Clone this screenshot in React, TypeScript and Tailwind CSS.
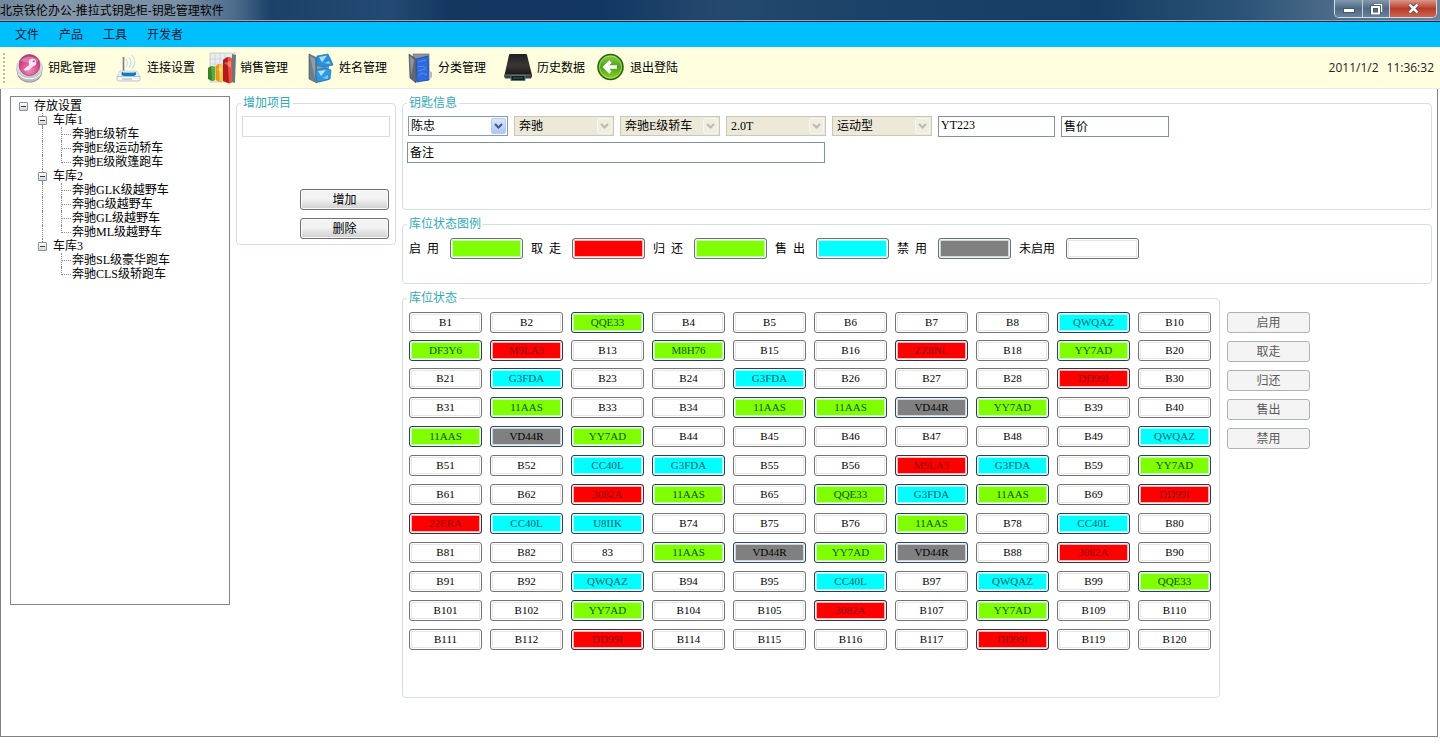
import React from "react";

const SONG = "font-['Liberation_Serif','Noto_Sans_CJK_SC',serif]";
const YAHEI = "font-['Open_Sans','Noto_Sans_CJK_SC',sans-serif]";

type Tone = "white" | "green" | "red" | "cyan" | "gray";

const toneClass: Record<Tone, string> = {
  white:
    "bg-white border-[#747474] text-black shadow-[inset_0_0_0_1px_#ffffff,inset_0_0_0_2px_#e6e6e6]",
  green:
    "bg-[#7fff00] border-[#1f4a3c] text-[#14522c] shadow-[inset_0_0_0_1px_#f2fff0,inset_0_0_0_2px_#c9ecc0]",
  red: "bg-[#ff0000] border-[#3f2c40] text-[#8f0a0a] shadow-[inset_0_0_0_1px_#ffeceb,inset_0_0_0_2px_#f3b6b4]",
  cyan: "bg-[#00ffff] border-[#17466a] text-[#14606c] shadow-[inset_0_0_0_1px_#effdff,inset_0_0_0_2px_#b4ecf2]",
  gray: "bg-[#808080] border-[#2a4a66] text-black shadow-[inset_0_0_0_1px_#eef4fa,inset_0_0_0_2px_#cfd4d8]",
};

const codeTone: Record<string, Tone> = {
  QQE33: "green",
  DF3Y6: "green",
  M8H76: "green",
  YY7AD: "green",
  "11AAS": "green",
  QWQAZ: "cyan",
  G3FDA: "cyan",
  CC40L: "cyan",
  U8IIK: "cyan",
  M9LA3: "red",
  ZZ8NL: "red",
  DD99I: "red",
  "3082A": "red",
  "22ERA": "red",
  VD44R: "gray",
};

const upperRows = [
  "B1 B2 QQE33 B4 B5 B6 B7 B8 QWQAZ B10",
  "DF3Y6 M9LA3 B13 M8H76 B15 B16 ZZ8NL B18 YY7AD B20",
  "B21 G3FDA B23 B24 G3FDA B26 B27 B28 DD99I B30",
];
const lowerRows = [
  "B31 11AAS B33 B34 11AAS 11AAS VD44R YY7AD B39 B40",
  "11AAS VD44R YY7AD B44 B45 B46 B47 B48 B49 QWQAZ",
  "B51 B52 CC40L G3FDA B55 B56 M9LA3 G3FDA B59 YY7AD",
  "B61 B62 3082A 11AAS B65 QQE33 G3FDA 11AAS B69 DD99I",
  "22ERA CC40L U8IIK B74 B75 B76 11AAS B78 CC40L B80",
  "B81 B82 83 11AAS VD44R YY7AD VD44R B88 3082A B90",
  "B91 B92 QWQAZ B94 B95 CC40L B97 QWQAZ B99 QQE33",
  "B101 B102 YY7AD B104 B105 3082A B107 YY7AD B109 B110",
  "B111 B112 DD99I B114 B115 B116 B117 DD99I B119 B120",
];

function Slot({ code }: { code: string }) {
  return (
    <button
      type="button"
      className={`h-[21px] rounded-[3px] border text-center text-[11px] leading-[19px] ${toneClass[codeTone[code] ?? "white"]}`}
    >
      {code}
    </button>
  );
}

function Group({
  title,
  className = "",
  children,
}: {
  title: string;
  className?: string;
  children: React.ReactNode;
}) {
  return (
    <fieldset className={`min-w-0 rounded-[4px] border border-[#d5dfe2] px-1 ${className}`}>
      <legend className="h-[14px] px-[2px] text-[12px] leading-[14px] text-[#2fa9b8]">{title}</legend>
      {children}
    </fieldset>
  );
}

function Combo({ label, value, disabled = false }: { label: string; value: string; disabled?: boolean }) {
  return (
    <div className="relative h-[20px] w-[100px]">
      <select
        aria-label={label}
        disabled={disabled}
        className={`block h-[20px] w-full appearance-none border pr-5 text-[12px] leading-[18px] text-black opacity-100 ${
          disabled ? "border-[#c9c7ba] bg-[#ece9d8] pl-1" : "border-[#7f9db9] bg-white pl-[2px]"
        }`}
      >
        <option>{value}</option>
      </select>
      <span
        className={`pointer-events-none absolute top-[2px] right-[2px] bottom-[2px] flex w-[15px] items-center justify-center rounded-[2px] border ${
          disabled
            ? "border-[#f7f6f0] bg-[#efece0] text-[#bdbbb0]"
            : "border-[#b4caf6] bg-linear-to-b from-[#dbe6fd] to-[#adc6f5] text-[#3f5a86]"
        }`}
      >
        <svg width="9" height="6" viewBox="0 0 9 6" fill="none" stroke="currentColor" strokeWidth="2">
          <path d="M1 1l3.500 3.500L8 1" />
        </svg>
      </span>
    </div>
  );
}

function KeyIcon() {
  return (
    <svg width="30" height="32" viewBox="0 0 30 32">
      <defs>
        <linearGradient id="kr" x1="0" y1="0" x2="0" y2="1">
          <stop offset="0" stopColor="#fff" />
          <stop offset="1" stopColor="#b9b9bd" />
        </linearGradient>
        <radialGradient id="kp" cx=".5" cy=".75" r=".8">
          <stop offset="0" stopColor="#f08ab8" />
          <stop offset=".6" stopColor="#d5448a" />
          <stop offset="1" stopColor="#b02a6c" />
        </radialGradient>
      </defs>
      <ellipse cx="14.500" cy="20" rx="12.500" ry="10.500" fill="#8f8f94" />
      <circle cx="14.500" cy="16.500" r="13" fill="url(#kr)" stroke="#b9b9be" strokeWidth=".7" />
      <path d="M3.500 22a12.500 9 0 0 0 22 0" stroke="#fff" fill="none" />
      <circle cx="14.500" cy="13" r="10.500" fill="url(#kp)" stroke="#99456f" strokeWidth=".7" />
      <path d="M5.500 9a10 8 0 0 1 18 0c-6 2-12 2-18 0z" fill="#fff" opacity=".3" />
      <circle cx="17.500" cy="10.500" r="3.800" fill="#ffe6f2" />
      <path d="M15.500 12l-7 5.500 2 1.500 1.500-1 1 .8 5-4.300z" fill="#ffe6f2" />
      <circle cx="18.800" cy="9.300" r="1.100" fill="#d5448a" />
    </svg>
  );
}

function RouterIcon() {
  return (
    <svg width="30" height="32" viewBox="0 0 30 32">
      <path d="M9.500 5v17" stroke="#777c82" strokeWidth="1.600" />
      <g fill="none" stroke="#c2e0f0" strokeWidth="1.200">
        <path d="M12 7q3 4 0 8" />
        <path d="M15 5q4 5.500 0 11" />
        <path d="M18 3q5.500 7 0 14" />
      </g>
      <path d="M6 19h17l3 6H3z" fill="#e9eef3" stroke="#c4ccd4" strokeWidth=".7" />
      <path d="M8 20h13.500q2 3.500-2 4h-9.500q-4-.5-2-4z" fill="#1b79b8" />
      <path d="M9 20.500h11.500" stroke="#7cd0ef" />
      <path d="M3 24.500h23v3q0 1.500-2 1.500H5q-2 0-2-1.500z" fill="#f3f6f9" stroke="#aab5c0" strokeWidth=".8" />
      <path d="M8 27h10" stroke="#9fb2c4" />
    </svg>
  );
}

function SalesIcon() {
  return (
    <svg width="30" height="34" viewBox="0 0 30 34">
      <path d="M3 2h25l-1 29H3z" fill="#e9edf0" stroke="#bcc3c8" strokeWidth=".8" />
      <path d="M3 8h24M3 13h24M3 18h24M8 2v20M13 2v20M18 2v20" stroke="#c5cbd0" strokeWidth=".7" />
      <path d="M25 3l4 1-1 28-3-1z" fill="#70757a" />
      <path d="M1 17l3-2 4 1v13l-3 1-4-2z" fill="#348427" />
      <path d="M4 15l4 1v13l-3 1z" fill="#59ab42" />
      <path d="M8.500 15l3-2 4 1v16l-3 1-4-2z" fill="#e19a12" />
      <path d="M12 13.500l3.500 1v15l-3 1z" fill="#f7cd4d" />
      <path d="M16 9l4-3 5 1v24l-3 1.500-6-2.500z" fill="#b71818" />
      <path d="M20.500 6l4.500 1v24l-3 1.500z" fill="#e95146" />
      <path d="M9 18l6-1v4z" fill="#fff" opacity=".3" />
      <path d="M17 12l7-2v7z" fill="#fff" opacity=".3" />
    </svg>
  );
}

function NamesIcon() {
  return (
    <svg width="30" height="34" viewBox="0 0 30 34">
      <path d="M3 3l8 4v25l-8-4z" fill="#6f7d88" stroke="#4c5965" strokeWidth=".7" />
      <path d="M11 7l12-1v23l-12 3z" fill="#8c9ba6" />
      <path d="M4 5l5 3v20z" fill="#a7b3bc" opacity=".6" />
      <path d="M11 5l11-2 2 4 3 7-9 2-8-2z" fill="#2692dd" stroke="#1870b3" strokeWidth=".7" />
      <path d="M13 6l8-1.500-5 7z" fill="#a7dcf8" />
      <path d="M18 12l5-2 1 3z" fill="#8ccff5" />
      <path d="M10 19l9-2 6 2-1 9-12 3-2-4z" fill="#2c9ae4" stroke="#1870b3" strokeWidth=".7" />
      <path d="M12 20l8-1-5 6z" fill="#b1e0f9" />
      <path d="M16 27l6-3v4z" fill="#7cc4f0" />
    </svg>
  );
}

function FolderIcon() {
  return (
    <svg width="30" height="34" viewBox="0 0 30 34">
      <path d="M8 3h16v26l-13 1z" fill="#8b93a1" stroke="#666e7a" strokeWidth=".7" />
      <path d="M11 8l12-3 1 24-12 2z" fill="#2f6ae0" stroke="#1946a4" strokeWidth=".7" />
      <path d="M13 11l8-2M13 16l5-1 3 2M13 20l8-2M13 25l4-3 5 2" stroke="#5d90ee" strokeWidth=".9" fill="none" />
      <path d="M24 20l3 1v5l-3 3z" fill="#b5bac2" />
      <path d="M4 3l7 5v24l-6-5z" fill="#626975" stroke="#474d58" strokeWidth=".7" />
      <path d="M5 5l4 4-3 16z" fill="#a2a9b4" opacity=".7" />
    </svg>
  );
}

function DriveIcon() {
  return (
    <svg width="30" height="32" viewBox="0 0 30 32">
      <defs>
        <linearGradient id="dg" x1="0" y1="0" x2="0" y2="1">
          <stop offset="0" stopColor="#202020" />
          <stop offset=".5" stopColor="#3b3636" />
          <stop offset="1" stopColor="#111" />
        </linearGradient>
      </defs>
      <path d="M5 3q0-1 1-1h16q1 0 1 1l5 20v2H.5v-2z" fill="url(#dg)" />
      <path d="M.5 22.500h27v3q0 1-1 1h-25q-1 0-1-1z" fill="#3c4246" />
      <path d="M1 23h26" stroke="#7a8488" strokeWidth=".7" />
      <path d="M7 23.500h14v5H7z" fill="#16191a" stroke="#55797a" />
      <path d="M9 26h10" stroke="#2f6f70" />
    </svg>
  );
}

function BackIcon() {
  return (
    <svg width="30" height="32" viewBox="0 0 30 32">
      <defs>
        <linearGradient id="bg" x1="0" y1="0" x2="0" y2="1">
          <stop offset="0" stopColor="#8fce45" />
          <stop offset=".5" stopColor="#4aa31b" />
          <stop offset="1" stopColor="#8ed61f" />
        </linearGradient>
      </defs>
      <circle cx="13.500" cy="15" r="12.500" fill="url(#bg)" stroke="#28600f" strokeWidth="1.500" />
      <circle cx="13.500" cy="15" r="11" fill="none" stroke="#b4e36e" strokeWidth=".8" />
      <path
        d="M20 15H8.500M13.500 9.500L8 15l5.500 5.500"
        fill="none"
        stroke="#fff"
        strokeWidth="3.400"
        strokeLinejoin="miter"
      />
    </svg>
  );
}

const tools = [
  { label: "钥匙管理", icon: <KeyIcon />, space: "mr-[18px]" },
  { label: "连接设置", icon: <RouterIcon />, space: "mr-[12px]" },
  { label: "销售管理", icon: <SalesIcon />, space: "mr-[18px]" },
  { label: "姓名管理", icon: <NamesIcon />, space: "mr-[18px]" },
  { label: "分类管理", icon: <FolderIcon />, space: "mr-[18px]" },
  { label: "历史数据", icon: <DriveIcon />, space: "mr-[12px]" },
  { label: "退出登陆", icon: <BackIcon />, space: "" },
];

const tree = [
  { name: "车库1", items: ["奔驰E级轿车", "奔驰E级运动轿车", "奔驰E级敞篷跑车"] },
  { name: "车库2", items: ["奔驰GLK级越野车", "奔驰G级越野车", "奔驰GL级越野车", "奔驰ML级越野车"] },
  { name: "车库3", items: ["奔驰SL级豪华跑车", "奔驰CLS级轿跑车"] },
];

function Toggle({ name, up, down }: { name: string; up: boolean; down: boolean }) {
  return (
    <span className="flex h-full w-[19px] flex-col items-center">
      <span className={`w-px flex-1 border-l border-dotted ${up ? "border-[#8a8a8a]" : "border-transparent"}`} />
      <button
        type="button"
        aria-label={`折叠 ${name}`}
        className="flex h-[9px] w-[9px] items-center justify-center rounded-[1px] border border-[#8b8f96] bg-linear-to-b from-white to-[#d2d6dc]"
      >
        <span className="h-px w-[5px] bg-[#2b3a55]" />
      </button>
      <span className={`h-[2px] w-px border-l border-dotted ${down ? "border-[#8a8a8a]" : "border-transparent"}`} />
    </span>
  );
}

function Tree() {
  return (
    <nav
      aria-label="存放设置"
      className="h-[509px] w-[220px] shrink-0 border border-[#828790] bg-white py-[2px] pl-[3px] text-[12px] leading-[14px]"
    >
      <div className="flex h-[14px]">
        <Toggle name="存放设置" up={false} down={false} />
        <span className="pl-px">存放设置</span>
      </div>
      <ul>
        {tree.map((group, g) => (
          <li key={group.name}>
            <div className="flex h-[14px] pl-[19px]">
              <Toggle name={group.name} up down={g < tree.length - 1} />
              <span className="pl-px">{group.name}</span>
            </div>
            <ul>
              {group.items.map((item, i) => (
                <li key={item} className="flex h-[14px] pl-[28px]">
                  <span
                    className={`w-[19px] border-l border-dotted ${g < tree.length - 1 ? "border-[#8a8a8a]" : "border-transparent"}`}
                  />
                  <span
                    className={`w-[10px] ${i < group.items.length - 1 ? "border-l border-dotted border-[#8a8a8a]" : ""}`}
                  >
                    <span
                      className={`block h-[8px] border-b border-dotted border-[#8a8a8a] ${i === group.items.length - 1 ? "border-l" : ""}`}
                    />
                  </span>
                  <span className="pl-px whitespace-nowrap">{item}</span>
                </li>
              ))}
            </ul>
          </li>
        ))}
      </ul>
    </nav>
  );
}

const legendItems: { label: string; tone: Tone }[] = [
  { label: "启  用", tone: "green" },
  { label: "取  走", tone: "red" },
  { label: "归  还", tone: "green" },
  { label: "售  出", tone: "cyan" },
  { label: "禁  用", tone: "gray" },
  { label: "未启用", tone: "white" },
];

export default function App() {
  return (
    <div className={`flex min-h-screen flex-col bg-white pb-[9px] text-black ${SONG}`}>
      <header
        className={`flex h-[22px] items-start justify-between overflow-hidden border-b border-[#0c2b4c] bg-[linear-gradient(90deg,#71879b_0px,#8398ab_60px,#7990a5_180px,#4d6c8b_235px,#1c4169_270px,#234a72_390px,#143760_450px,#123762_600px,#25496e_720px,#1b4268_860px,#163d63_1100px,#2b5377_1240px,#4a6a87_1330px,#6b8399_1440px)] ${YAHEI}`}
      >
        <h1 className="h-[21px] flex-1 border-b border-[#8da4b9] text-[12px] leading-[22px] whitespace-nowrap">
          北京铁伦办公-推拉式钥匙柜-钥匙管理软件
        </h1>
        <div className="h-[21px] border-b border-[#8da4b9] pr-[3px]">
          <div className="flex h-[18px] overflow-hidden rounded-b-[5px] border border-t-0 border-[#d3dde6] text-white">
            <button
              type="button"
              aria-label="最小化"
              className="flex w-[28px] items-center justify-center border-r border-[#c3cfda] bg-linear-to-b from-[#8599ad] via-[#4f6a84] to-[#6a8299] pt-1"
            >
              <svg width="12" height="5" viewBox="0 0 12 5">
                <rect x=".5" y=".5" width="11" height="4" fill="#fff" stroke="#44566a" />
              </svg>
            </button>
            <button
              type="button"
              aria-label="还原"
              className="flex w-[27px] items-center justify-center border-r border-[#c3cfda] bg-linear-to-b from-[#8599ad] via-[#4f6a84] to-[#6a8299]"
            >
              <svg width="13" height="12" viewBox="0 0 13 12" fill="none">
                <path d="M4 1.500h7.500v7.500" stroke="#44566a" strokeWidth="3" />
                <path d="M4 1.500h7.500v7.500" stroke="#fff" strokeWidth="1.500" />
                <rect x="2" y="4" width="7" height="6.500" stroke="#44566a" strokeWidth="3.500" />
                <rect x="2" y="4" width="7" height="6.500" stroke="#fff" strokeWidth="2" />
              </svg>
            </button>
            <button
              type="button"
              aria-label="关闭"
              className="flex w-[46px] items-center justify-center bg-linear-to-b from-[#d9978b] via-[#b93a28] to-[#cf6350]"
            >
              <svg width="13" height="11" viewBox="0 0 13 11">
                <path d="M2.500 1.500l8 8M10.500 1.500l-8 8" stroke="#5d3a3a" strokeWidth="4" />
                <path d="M2.500 1.500l8 8M10.500 1.500l-8 8" stroke="#fff" strokeWidth="2.500" />
              </svg>
            </button>
          </div>
        </div>
      </header>

      <nav
        aria-label="菜单"
        className={`flex h-[25px] items-center gap-5 bg-[#00bfff] pl-[15px] text-[12px] leading-[24px] text-[#0b2038] ${YAHEI}`}
      >
        <a href="#file">文件</a>
        <a href="#product">产品</a>
        <a href="#tools">工具</a>
        <a href="#developer">开发者</a>
      </nav>

      <div
        className={`flex h-[42px] items-center border-b border-[#ecece2] bg-[#ffffe0] pr-[6px] pl-[3px] text-[12px] ${YAHEI}`}
      >
        <span className="mr-[10px] h-[30px] border-l-2 border-dotted border-[#b9b9a5]" />
        {tools.map((tool) => (
          <button key={tool.label} type="button" className={`flex h-[36px] items-center gap-[3px] ${tool.space}`}>
            {tool.icon}
            <span className="whitespace-nowrap">{tool.label}</span>
          </button>
        ))}
        <p className="ml-auto flex gap-2 whitespace-nowrap text-[#222]">
          <span>2011/1/2</span>
          <span>11:36:32</span>
        </p>
      </div>

      <main className="mr-[2px] flex flex-1 items-start border border-t-0 border-[#828282] pt-[7px] pr-[5px] pl-[9px]">
        <Tree />

        <Group title="增加项目" className="ml-[6px] h-[149px] w-[160px] shrink-0">
          <div className="flex flex-col pt-[6px] pr-px pl-px">
            <input
              aria-label="增加项目"
              className="h-[21px] w-full border border-[#d9dde0] bg-white px-1 text-[12px]"
            />
            <div className="flex flex-col items-end gap-2 pt-[52px] pr-px">
              {["增加", "删除"].map((label) => (
                <button
                  key={label}
                  type="button"
                  className="h-[21px] w-[89px] rounded-[3px] border border-[#707070] bg-linear-to-b from-[#f3f3f3] from-45% to-[#cfcfcf] text-[12px] leading-[20px] shadow-[inset_0_0_0_1px_#fbfbfb]"
                >
                  {label}
                </button>
              ))}
            </div>
          </div>
        </Group>

        <div className="ml-[6px] flex min-w-0 flex-1 flex-col gap-[7px]">
          <Group title="钥匙信息" className="h-[114px]">
            <div className="flex gap-[6px] pt-[6px] pl-px">
              <Combo label="姓名" value="陈忠" />
              <Combo label="品牌" value="奔驰" disabled />
              <Combo label="车型" value="奔驰E级轿车" disabled />
              <Combo label="排量" value="2.0T" disabled />
              <Combo label="类型" value="运动型" disabled />
              <input
                aria-label="编号"
                defaultValue="YT223"
                className="h-[21px] w-[117px] border border-[#7e929f] bg-white px-[2px] pb-[2px] text-[12px]"
              />
              <input
                aria-label="售价"
                defaultValue="售价"
                className="h-[21px] w-[108px] border border-[#7e929f] bg-white px-[2px] pb-[2px] text-[12px]"
              />
            </div>
            <input
              aria-label="备注"
              defaultValue="备注"
              className="mt-[5px] block h-[21px] w-[418px] border border-[#7e929f] bg-white px-[2px] pb-[2px] text-[12px]"
            />
          </Group>

          <Group title="库位状态图例" className="h-[67px]">
            <ul className="flex gap-2 pt-[7px] pl-[2px]">
              {legendItems.map((item) => (
                <li key={item.label} className="flex items-center gap-[11px]">
                  <span className="text-[12px] leading-[20px] whitespace-pre">{item.label}</span>
                  <span className={`h-[21px] w-[73px] rounded-[3px] border ${toneClass[item.tone]} border-[#6c7470]!`} />
                </li>
              ))}
            </ul>
          </Group>

          <div className="flex items-start gap-[7px]">
            <Group title="库位状态" className="h-[407px] shrink-0">
              <div className="flex flex-col gap-2 pt-[7px] pr-1 pl-[2px]">
                <div className="grid grid-cols-[repeat(10,73px)] gap-x-2 gap-y-[7px]">
                  {upperRows.join(" ").split(" ").map((code, i) => (
                    <Slot key={i} code={code} />
                  ))}
                </div>
                <div className="grid grid-cols-[repeat(10,73px)] gap-x-2 gap-y-2">
                  {lowerRows.join(" ").split(" ").map((code, i) => (
                    <Slot key={i} code={code} />
                  ))}
                </div>
              </div>
            </Group>
            <div className="flex w-[83px] flex-col gap-2 pt-[21px]">
              {["启用", "取走", "归还", "售出", "禁用"].map((label) => (
                <button
                  key={label}
                  type="button"
                  disabled
                  className="h-[21px] rounded-[3px] border border-[#adb2b5] bg-[#f4f4f4] text-[12px] leading-[20px] text-[#5a5a5a]"
                >
                  {label}
                </button>
              ))}
            </div>
          </div>
        </div>
      </main>
    </div>
  );
}
